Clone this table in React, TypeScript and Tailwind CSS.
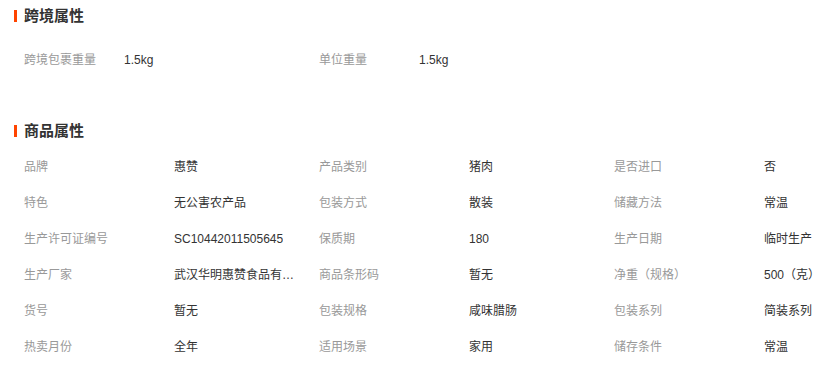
const crossBorder = [
  { label: '跨境包裹重量', value: '1.5kg' },
  { label: '单位重量', value: '1.5kg' },
];

const productAttrs = [
  { label: '品牌', value: '惠赞' },
  { label: '产品类别', value: '猪肉' },
  { label: '是否进口', value: '否' },
  { label: '特色', value: '无公害农产品' },
  { label: '包装方式', value: '散装' },
  { label: '储藏方法', value: '常温' },
  { label: '生产许可证编号', value: 'SC10442011505645' },
  { label: '保质期', value: '180' },
  { label: '生产日期', value: '临时生产' },
  { label: '生产厂家', value: '武汉华明惠赞食品有限公司' },
  { label: '商品条形码', value: '暂无' },
  { label: '净重（规格）', value: '500（克）' },
  { label: '货号', value: '暂无' },
  { label: '包装规格', value: '咸味腊肠' },
  { label: '包装系列', value: '简装系列' },
  { label: '热卖月份', value: '全年' },
  { label: '适用场景', value: '家用' },
  { label: '储存条件', value: '常温' },
];

function SectionTitle({ text }: { text: string }) {
  return (
    <div className="flex items-center h-[32px]">
      <span className="w-[3px] h-[12px] bg-[#ff4400] mr-[7px]" />
      <span className="text-[15px] font-bold text-[#333]">{text}</span>
    </div>
  );
}

export default function App() {
  return (
    <div
      className="w-[833px] h-[366px] bg-white pl-[14px] overflow-hidden text-[12px]"
      style={{ fontFamily: '"Liberation Sans", "Noto Sans CJK SC", sans-serif' }}
    >
      <SectionTitle text="跨境属性" />
      <div className="flex pl-[10px] mt-[10px]">
        {crossBorder.map((a) => (
          <div key={a.label} className="flex items-center h-[36px] w-[295px]">
            <span className="w-[100px] text-[#999]">{a.label}</span>
            <span className="text-[#333]">{a.value}</span>
          </div>
        ))}
      </div>

      <div className="mt-[37px]">
        <SectionTitle text="商品属性" />
      </div>
      <div className="grid grid-cols-[295px_295px_220px] pl-[10px] mt-[2px]">
        {productAttrs.map((a) => (
          <div key={a.label} className="flex items-center h-[36px]">
            <span className="w-[150px] shrink-0 text-[#999]">{a.label}</span>
            <span className="max-w-[124px] truncate text-[#333]">{a.value}</span>
          </div>
        ))}
      </div>
    </div>
  );
}
